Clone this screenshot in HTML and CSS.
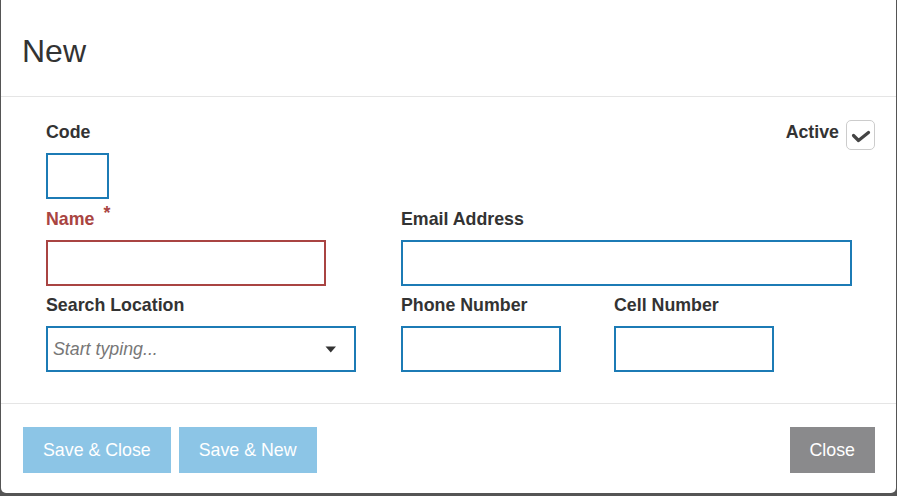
FILE: index.html
```html
<!DOCTYPE html>
<html lang="en">
<head>
<meta charset="utf-8">
<title>New</title>
<link rel="stylesheet" href="styles.css">
</head>
<body>
<div class="modal">
  <div class="modal-header">
    <h1 class="modal-title">New</h1>
  </div>
  <div class="modal-body">
    <div class="row-top">
      <div class="field">
        <label class="label">Code</label>
        <input class="input input-code" type="text">
      </div>
      <div class="active">
        <span class="label">Active</span>
        <span class="checkbox">
          <svg width="28" height="29" viewBox="0 0 28 29"><path d="M6.5 14.5 L11.5 19.5 L21.5 11.5" fill="none" stroke="#444" stroke-width="3.2" stroke-linecap="round" stroke-linejoin="round"/></svg>
        </span>
      </div>
    </div>
    <div class="grid">
      <div class="field">
        <label class="label label-error">Name <span class="req">*</span></label>
        <input class="input input-error input-name" type="text">
      </div>
      <div class="field span2">
        <label class="label">Email Address</label>
        <input class="input input-email" type="text">
      </div>
      <div class="field">
        <label class="label">Search Location</label>
        <div class="input select">
          <input class="select-input" type="text" placeholder="Start typing...">
          <svg class="caret" width="12" height="7" viewBox="0 0 12 7"><path d="M0.5 0.5 L11 0.5 L5.75 6.5 Z" fill="#333"/></svg>
        </div>
      </div>
      <div class="field">
        <label class="label">Phone Number</label>
        <input class="input input-small" type="text">
      </div>
      <div class="field">
        <label class="label">Cell Number</label>
        <input class="input input-small" type="text">
      </div>
    </div>
  </div>
  <div class="modal-footer">
    <div class="btn-group">
      <button class="btn btn-primary">Save &amp; Close</button>
      <button class="btn btn-primary">Save &amp; New</button>
    </div>
    <button class="btn btn-default">Close</button>
  </div>
</div>
</body>
</html>
```

FILE: styles.css
```css
html, body {
  margin: 0;
  padding: 0;
  background: #555;
  height: 100%;
}

body {
  font-family: "Liberation Sans", Arial, sans-serif;
  color: #333;
  overflow: hidden;
}

.modal {
  margin-left: 1px;
  width: 895px;
  background: #fff;
  border-radius: 0 0 5px 5px;
  box-sizing: border-box;
}

.modal-header {
  padding: 34px 21px 28px;
  border-bottom: 1px solid #e5e5e5;
}

.modal-title {
  margin: 0;
  font-size: 32px;
  font-weight: normal;
  line-height: 34px;
  color: #333;
}

.modal-body {
  padding: 23px 21px 31px 45px;
}

.row-top {
  display: flex;
  justify-content: space-between;
  align-items: flex-start;
  margin-bottom: 8px;
}

.field {
  display: flex;
  flex-direction: column;
  align-items: flex-start;
}

.label {
  display: block;
  font-size: 17.8px;
  font-weight: bold;
  line-height: 25px;
  margin-bottom: 8px;
  color: #333;
}

.label-error {
  color: #a94442;
}

.req {
  position: relative;
  top: -6px;
  margin-left: 4px;
}

.input {
  box-sizing: border-box;
  height: 46px;
  border: 2px solid #1c7bb5;
  background: #fff;
  margin: 0;
  padding: 0 5px;
  font-family: inherit;
  font-size: 17.6px;
  outline: none;
}

.input-code { width: 63px; }
.input-name { width: 280px; }
.input-email { width: 451px; }
.input-small { width: 160px; }

.input-error {
  border-color: #a94442;
}

.active {
  display: flex;
  align-items: flex-start;
  gap: 7px;
}

.active .label {
  margin-bottom: 0;
}

.checkbox {
  display: block;
  box-sizing: border-box;
  width: 29px;
  height: 30px;
  border: 1px solid #ccc;
  border-radius: 5px;
  background: #fff;
}

.checkbox svg {
  display: block;
}

.grid {
  display: grid;
  grid-template-columns: 355px 213px 1fr;
  row-gap: 7px;
}

.span2 {
  grid-column: span 2;
}

.select {
  width: 310px;
  display: flex;
  align-items: center;
  padding: 0 17px 0 5px;
}

.select-input {
  flex: 1;
  min-width: 0;
  border: none;
  outline: none;
  padding: 0;
  margin: 0;
  font-family: inherit;
  font-size: 17.8px;
  background: transparent;
}

.select-input::placeholder {
  color: #777;
  font-style: italic;
}

.caret {
  display: block;
  margin-top: 1px;
}

.modal-footer {
  display: flex;
  justify-content: space-between;
  align-items: center;
  padding: 23px 21px 20px 22px;
  border-top: 1px solid #e5e5e5;
}

.btn-group {
  display: flex;
  gap: 8px;
}

.btn {
  height: 46px;
  padding: 0 20px;
  border: none;
  border-radius: 0;
  font-family: inherit;
  font-size: 17.8px;
  color: #fff;
  cursor: pointer;
}

.btn-primary {
  background: #8cc5e6;
}

.btn-default {
  background: #8a8a8c;
}
```
